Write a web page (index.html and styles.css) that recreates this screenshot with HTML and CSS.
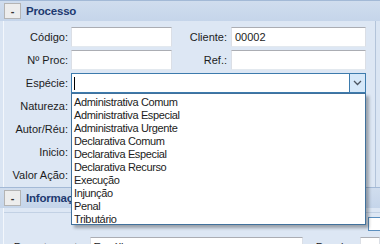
FILE: index.html
```html
<!DOCTYPE html>
<html>
<head>
<meta charset="utf-8">
<link rel="stylesheet" href="styles.css">
</head>
<body>
<div class="panel">
  <section class="group">
    <header class="ghead"><span class="tog">-</span><span class="gtitle">Processo</span></header>
    <div class="gbody g1">
      <div class="row">
        <span class="lbl">Código:</span><span class="inp w1"></span>
        <span class="lbl2">Cliente:</span><span class="inp w2">00002</span>
      </div>
      <div class="row">
        <span class="lbl">Nº Proc:</span><span class="inp w1"></span>
        <span class="lbl2">Ref.:</span><span class="inp w2"></span>
      </div>
      <div class="row">
        <span class="lbl">Espécie:</span>
        <div class="combo"><span class="caret"></span><span class="cbtn"><svg width="9" height="6" viewBox="0 0 9 6"><path d="M1 1 L4.5 4.5 L8 1" fill="none" stroke="#4d5560" stroke-width="1.3"/></svg></span></div>
      </div>
      <div class="row"><span class="lbl">Natureza:</span></div>
      <div class="row"><span class="lbl">Autor/Réu:</span></div>
      <div class="row"><span class="lbl">Inicio:</span></div>
      <div class="row"><span class="lbl">Valor Ação:</span></div>
    </div>
  </section>
  <section class="group">
    <header class="ghead"><span class="tog">-</span><span class="gtitle">Informações</span></header>
    <div class="gbody g2">
      <div class="row rowa"><span class="mini"></span></div>
      <div class="row">
        <span class="lbl lblw">Departamento:</span><span class="inp w3">Espólio</span>
        <span class="lbl3">Dossier:</span><span class="inp w4"></span>
      </div>
    </div>
  </section>
  <ul class="dropdown">
    <li>Administrativa Comum</li>
    <li>Administrativa Especial</li>
    <li>Administrativa Urgente</li>
    <li>Declarativa Comum</li>
    <li>Declarativa Especial</li>
    <li>Declarativa Recurso</li>
    <li>Execução</li>
    <li>Injunção</li>
    <li>Penal</li>
    <li>Tributário</li>
  </ul>
</div>
</body>
</html>
```

FILE: styles.css
```css
html, body {
  margin: 0;
  padding: 0;
}
body {
  width: 380px;
  height: 244px;
  overflow: hidden;
  background: #dae5f3;
  font-family: "Liberation Sans", Arial, sans-serif;
  font-size: 11px;
  color: #1c1c1c;
}
.panel {
  position: relative;
}
.ghead {
  height: 21px;
  box-sizing: border-box;
  border-top: 1px solid #a3b9d6;
  background: linear-gradient(#d0ddee, #c5d5ea);
  display: flex;
  align-items: center;
  padding-left: 4px;
  gap: 5px;
}
.tog {
  width: 17px;
  height: 16px;
  box-sizing: border-box;
  background: #ededed;
  border: 1px solid #b4b4b4;
  display: flex;
  align-items: center;
  justify-content: center;
  font-weight: bold;
  color: #333;
  line-height: 1;
}
.gtitle {
  font-weight: bold;
  color: #1e3a70;
  font-size: 11.5px;
  letter-spacing: -0.2px;
}
.gbody {
  margin-left: 3px;
  border-left: 1px solid #f3f7fc;
  background: #dde7f4;
  display: flex;
  flex-direction: column;
  gap: 3px;
}
.g1 {
  margin-right: 4px;
  border-right: 1px solid #b3c4da;
  padding: 6px 0 2px;
}
.g2 {
  padding: 6px 0 0;
}
.row {
  height: 20px;
  display: flex;
  align-items: center;
}
.lbl {
  width: 64px;
  text-align: right;
  margin-right: 3px;
  white-space: nowrap;
}
.lblw {
  width: 84px;
}
.lbl2 {
  width: 55px;
  text-align: right;
  margin-right: 4px;
  white-space: nowrap;
}
.lbl3 {
  width: 54px;
  text-align: right;
  margin-right: 4px;
  white-space: nowrap;
}
.inp {
  height: 20px;
  box-sizing: border-box;
  background: #fff;
  border: 1px solid #abadb3;
  border-left-color: #dbdfe6;
  border-right-color: #dbdfe6;
  border-bottom-color: #e3e9ef;
  padding: 0 3px;
  display: flex;
  align-items: center;
  white-space: nowrap;
  overflow: hidden;
}
.w1 { width: 101px; }
.w2 { width: 135px; }
.w3 { width: 217px; }
.w4 { width: 20px; }
.combo {
  width: 295px;
  height: 20px;
  box-sizing: border-box;
  border: 1px solid #3d7bad;
  background: #fff;
  display: flex;
  align-items: center;
  justify-content: space-between;
}
.caret {
  width: 1px;
  height: 13px;
  background: #000;
  margin-left: 2px;
}
.cbtn {
  width: 16px;
  height: 18px;
  box-sizing: border-box;
  border-left: 1px solid #3d7bad;
  background: #d6e8f9;
  display: flex;
  align-items: center;
  justify-content: center;
}
.rowa {
  justify-content: flex-end;
  border-top: 1px solid #c2d1e4;
  margin-top: -2px;
  height: 21px;
}
.mini {
  width: 12px;
  height: 14px;
  box-sizing: border-box;
  border: 1px solid #5b8fbf;
  border-right: 0;
  background: #fff;
}
.dropdown {
  position: absolute;
  left: 71px;
  top: 93px;
  width: 295px;
  height: 132px;
  box-sizing: border-box;
  margin: 0;
  padding: 2px 0 0 2px;
  list-style: none;
  background: #fff;
  border: 1px solid #41719c;
  box-shadow: 3px 3px 3px rgba(0, 0, 0, 0.3);
}
.dropdown li {
  height: 13px;
  line-height: 13px;
  white-space: nowrap;
  letter-spacing: -0.35px;
}
```
